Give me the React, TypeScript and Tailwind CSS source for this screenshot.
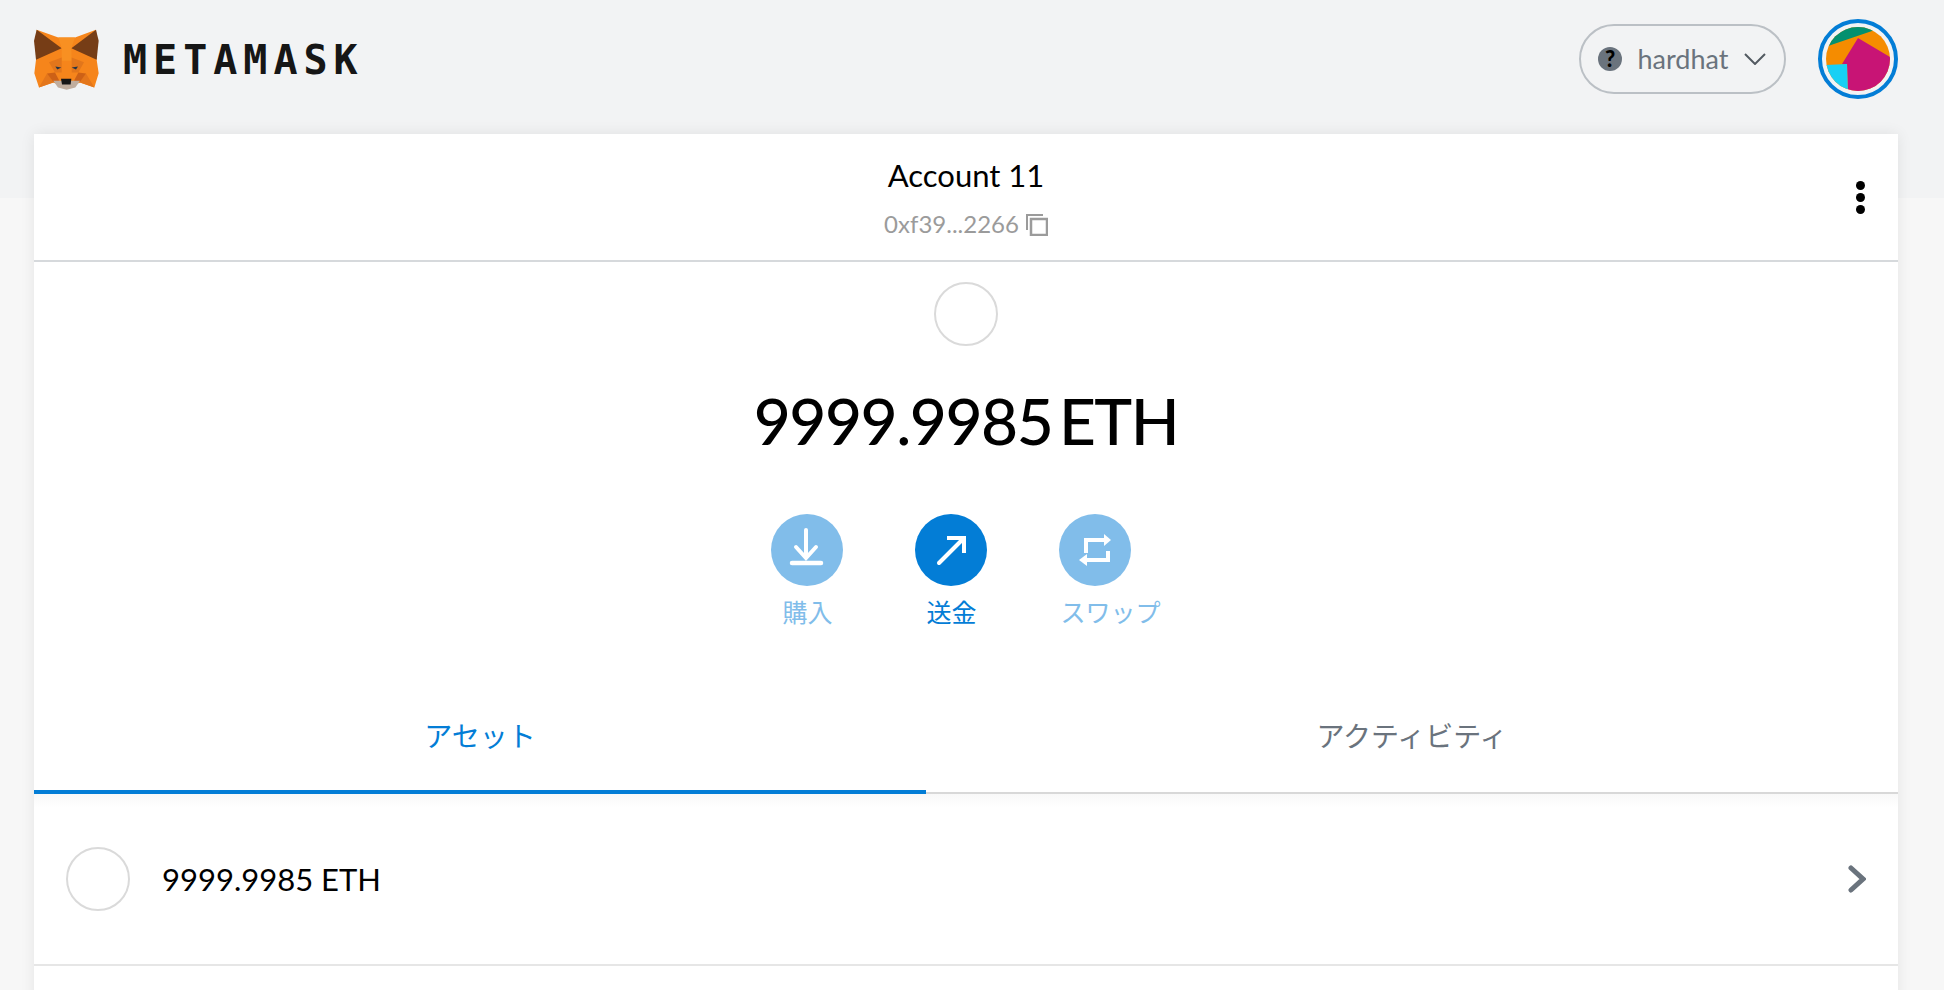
const latin = "font-['Lato','Noto_Sans_CJK_JP',sans-serif]";

function FoxLogo() {
  return (
    <svg viewBox="102 85 195 182" className="h-[61px] w-[65px]">
      <polygon fill="#f6851b" points="110,87 175,110 225,110 288,87 290,177 296,217 283,260 240,245 200,262 160,245 117,260 103,217 108,177" />
      <polygon fill="#763d16" points="110,87 185,142 108,177 102,120" />
      <polygon fill="#763d16" points="288,87 214,142 290,177 296,120" />
      <polygon fill="#f89022" points="175,110 225,110 214,142 215,180 185,180 185,142" />
      <polygon fill="#e2761b" points="147,184 185,170 185,215 165,215" />
      <polygon fill="#e2761b" points="252,184 215,170 215,215 235,215" />
      <polygon fill="#233447" points="166,197 184,200 172,206" />
      <polygon fill="#233447" points="234,197 215,200 228,206" />
      <polygon fill="#e4761b" points="141,218 165,245 160,245 117,260" />
      <polygon fill="#e4761b" points="258,218 235,245 240,245 283,260" />
      <polygon fill="#cd6116" points="141,218 165,215 178,240 160,243" />
      <polygon fill="#cd6116" points="258,218 235,215 222,240 240,243" />
      <polygon fill="#c0ad9e" points="160,240 240,240 226,260 200,267 174,260" />
      <polygon fill="#161616" points="183,234 214,234 212,251 186,251" />
    </svg>
  );
}

function Avatar() {
  return (
    <div className="flex size-20 items-center justify-center rounded-full border-4 border-[#037dd6]">
      <svg viewBox="0 0 64 64" className="size-16 rounded-full">
        <rect width="64" height="64" fill="#f58c00" />
        <polygon fill="#03906f" points="0,-2 64,-2 46,4 5,18 0,20" />
        <polygon fill="#c81475" points="32,11 64,30 64,66 22,66 21,37 16,37" />
        <polygon fill="#18d0f5" points="0,38 21,37 22,66 0,66" />
      </svg>
    </div>
  );
}

function ActionButton({ label, dim, alignStart, children }: { label: string; dim?: boolean; alignStart?: boolean; children: React.ReactNode }) {
  return (
    <div className={alignStart ? "flex flex-col items-start" : "flex w-[72px] flex-col items-center"}>
      <div className={dim ? "size-[72px] rounded-full bg-[#81bdea]" : "size-[72px] rounded-full bg-[#037dd6]"}>
        <svg viewBox="0 0 72 72" className="size-[72px]" fill="none" stroke="#fff" strokeWidth="4">
          {children}
        </svg>
      </div>
      <span className={`mt-[8px] whitespace-nowrap text-[25px] leading-[36px] ${alignStart ? "ml-[1px]" : ""} ${dim ? "text-[#81bdea]" : "text-[#037dd6]"}`}>
        {label}
      </span>
    </div>
  );
}

export default function App() {
  return (
    <div className={`h-[990px] overflow-hidden bg-[linear-gradient(#f2f3f4_198px,#f7f7f7_198px)] ${latin}`}>
      {/* Top bar */}
      <header className="flex h-[118px] items-center justify-between pl-[34px] pr-[46px]">
        <div className="flex items-center">
          <FoxLogo />
          <span className="ml-[24px] mt-[2px] font-['DejaVu_Sans_Mono',monospace] text-[40px] font-bold leading-none tracking-[6px] text-[#161616]">
            METAMASK
          </span>
        </div>
        <div className="flex items-center">
          <button className="flex h-[70px] w-[207px] items-center rounded-full border-2 border-[#bbc0c5] pl-[17px]">
            <span className="flex size-6 items-center justify-center rounded-full bg-[#6a737d] text-[22px] font-black leading-none text-black">?</span>
            <span className="ml-[10px] w-[102px] text-center text-[27px] text-[#6a737d]">hardhat</span>
            <svg viewBox="0 0 22 12" className="ml-[10px] h-3 w-[22px]" fill="none" stroke="#535a61" strokeWidth="2">
              <polyline points="1,1 11,11 21,1" />
            </svg>
          </button>
          <div className="ml-[32px]">
            <Avatar />
          </div>
        </div>
      </header>

      <main className="mx-[34px] mt-[16px] min-h-[900px] w-[1864px] bg-white shadow-[0_0_14px_rgba(0,0,0,0.08)]">
        {/* Account header */}
        <section className="grid h-[128px] grid-cols-[1fr_auto_1fr] items-center border-b-2 border-[#d6d9dc]">
          <div />
          <div className="flex flex-col items-center">
            <span className="text-[31px] leading-[44px] text-black">Account 11</span>
            <span className="mt-[9px] flex items-center text-[24px] leading-[36px] text-[#9b9b9b]">
              0xf39...2266
              <svg viewBox="0 0 22 22" className="ml-[7px] mt-[2px] size-[22px]" fill="none" stroke="#9b9b9b" strokeWidth="2">
                <path d="M1 16V1h16" />
                <rect x="5" y="5" width="16" height="16" strokeWidth="2.5" />
              </svg>
            </span>
          </div>
          <div className="flex flex-col items-end gap-[3px] pr-[33px]">
            <span className="size-[9px] rounded-full bg-black" />
            <span className="size-[9px] rounded-full bg-black" />
            <span className="size-[9px] rounded-full bg-black" />
          </div>
        </section>

        {/* Balance and actions */}
        <section className="flex flex-col items-center pt-[20px]">
          <div className="size-16 rounded-full border-2 border-[#dadada]" />
          <div className="mt-[30px] text-[64px] font-medium leading-[90px] tracking-[-1.5px] text-black [word-spacing:-8px]">
            9999.9985 ETH
          </div>
          <div className="mt-[48px] flex gap-[72px]">
            <ActionButton label="購入" dim>
              <path d="M35 16v28M25 33l10 11 10-11" strokeLinecap="round" />
              <path d="M21 49h29" strokeLinecap="round" strokeWidth="4.5" />
            </ActionButton>
            <ActionButton label="送金">
              <path d="M24 49L48 25" strokeLinecap="round" />
              <path d="M32 24h17v15" />
            </ActionButton>
            <ActionButton label="スワップ" dim alignStart>
              <path d="M27 39V26h20" />
              <polygon points="45,20 52,26 45,32" fill="#fff" stroke="none" />
              <path d="M49 37v9H27" />
              <polygon points="28,40 20,46 28,52" fill="#fff" stroke="none" />
            </ActionButton>
          </div>
        </section>

        {/* Tabs */}
        <nav className="mt-[57px] flex h-[107px] border-b-2 border-[#d8d8d8] text-[28px]">
          <div className="-mb-[2px] flex w-[892px] items-center justify-center border-b-4 border-[#037dd6] pb-[5px] text-[#037dd6]">
            アセット
          </div>
          <div className="flex flex-1 items-center justify-center pb-[8px] text-[#6a737d]">
            アクティビティ
          </div>
        </nav>

        {/* Asset row */}
        <div className="flex h-[172px] items-center border-b-2 border-[#e6e6e6] bg-[linear-gradient(#f8f8f8,#fff_14px)] px-[32px]">
          <div className="size-16 rounded-full border-2 border-[#dadada]" />
          <span className="ml-[32px] flex-1 text-[31px] text-black">9999.9985 ETH</span>
          <svg viewBox="0 0 18 28" className="h-7 w-[18px]" fill="none" stroke="#6a737d" strokeWidth="5" strokeLinecap="round">
            <polyline points="3,3 15,14 3,25" />
          </svg>
        </div>
      </main>
    </div>
  );
}
